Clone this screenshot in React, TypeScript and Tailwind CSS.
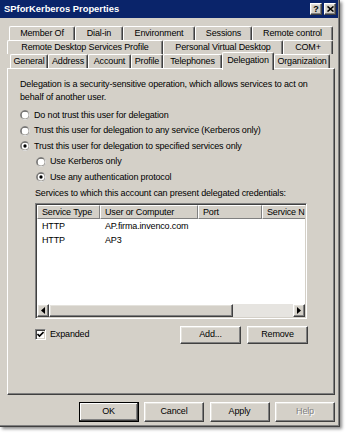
import React from 'react';

const raised = 'border-t border-l border-t-white border-l-white border-r border-b border-r-[#404040] border-b-[#404040] shadow-[inset_-1px_-1px_0_#808080,inset_1px_1px_0_#e4e2dc]';

const Radio = ({ checked }: { checked?: boolean }) => (
  <svg width="10" height="10" viewBox="0 0 12 12" className="shrink-0">
    <circle cx="6" cy="6" r="5.5" fill="none" stroke="#808080" />
    <path d="M9.89 2.11 A5.5 5.5 0 0 1 2.11 9.89" fill="none" stroke="#ffffff" />
    <circle cx="6" cy="6" r="4.5" fill="none" stroke="#404040" />
    <path d="M9.18 2.82 A4.5 4.5 0 0 1 2.82 9.18" fill="none" stroke="#d4d0c8" />
    <circle cx="6" cy="6" r="4" fill="#ffffff" />
    {checked && <circle cx="6" cy="6" r="2" fill="#000000" />}
  </svg>
);

const RadioRow = ({ label, checked, indent }: { label: string; checked?: boolean; indent?: boolean }) => (
  <div className={`h-[15.5px] flex items-center gap-[4px] ${indent ? 'ml-[16px]' : ''}`}>
    <Radio checked={checked} />
    <span className="leading-[13px] whitespace-nowrap">{label}</span>
  </div>
);

const Tab = ({ label, w, selected }: { label: string; w: string; selected?: boolean }) => (
  <div
    className={`${w} ${selected ? 'relative z-10 -mt-[2px] h-[18px] pt-[1px]' : 'h-[14px]'} shrink-0 bg-[#d4d0c8] rounded-t-[2px] border-t border-l border-white border-r border-r-[#404040] shadow-[inset_-1px_0_0_#808080] flex justify-center leading-[13px] whitespace-nowrap`}
  >
    {label}
  </div>
);

const Button = ({ label, w, isDefault, disabled }: { label: string; w: string; isDefault?: boolean; disabled?: boolean }) => (
  <div
    className={`${w} h-[20px] shrink-0 flex items-center justify-center bg-[#d4d0c8] ${
      isDefault
        ? 'border border-black shadow-[inset_-1px_-1px_0_#404040,inset_1px_1px_0_#ffffff,inset_-2px_-2px_0_#808080]'
        : raised
    } ${disabled ? 'text-[#808080] [text-shadow:1px_1px_0_#ffffff]' : ''}`}
  >
    {label}
  </div>
);

const Arrow = ({ dir }: { dir: 'left' | 'right' }) => (
  <svg width="4" height="7" viewBox="0 0 4 7">
    {dir === 'left' ? <path d="M4 0 L0 3.5 L4 7 Z" fill="#000" /> : <path d="M0 0 L4 3.5 L0 7 Z" fill="#000" />}
  </svg>
);

const columns = [
  { label: 'Service Type', w: 'w-[63px]' },
  { label: 'User or Computer', w: 'w-[98px]' },
  { label: 'Port', w: 'w-[64px]' },
  { label: 'Service N', w: 'w-[90px]' },
];

const rows = [
  ['HTTP', 'AP.firma.invenco.com'],
  ['HTTP', 'AP3'],
];

export default function App() {
  return (
    <div className="w-[347px] h-[433px] bg-white overflow-hidden font-['Liberation_Sans',Arial,sans-serif] text-[9px] tracking-[-0.15px] text-black">
      <div className="w-[340px] h-[427px] bg-[#d4d0c8] flex flex-col border-r border-b border-[#404040] shadow-[inset_-1px_-1px_0_#808080,2px_2px_3px_rgba(0,0,0,0.45)]">
        {/* Title bar */}
        <div className="h-[18px] mr-[1px] bg-[#0a246a] flex items-center justify-between pl-[4px] pr-[2px]">
          <span className="text-white font-bold text-[9.4px] tracking-normal">SPforKerberos Properties</span>
          <div className="flex gap-[2px]">
            <div className={`w-[12px] h-[12px] bg-[#d4d0c8] ${raised} flex items-center justify-center text-[9px] font-bold leading-none`}>?</div>
            <div className={`w-[12px] h-[12px] bg-[#d4d0c8] ${raised} flex items-center justify-center`}>
              <svg width="7" height="6" viewBox="0 0 7 6">
                <path d="M0.5 0.5 L6.5 5.5 M6.5 0.5 L0.5 5.5" stroke="#000" strokeWidth="1.6" />
              </svg>
            </div>
          </div>
        </div>

        {/* Tabs */}
        <div className="mt-[8px] flex flex-col">
          <div className="flex ml-[9px]">
            <Tab label="Member Of" w="w-[66px]" />
            <Tab label="Dial-in" w="w-[48px]" />
            <Tab label="Environment" w="w-[72px]" />
            <Tab label="Sessions" w="w-[57px]" />
            <Tab label="Remote control" w="w-[81px]" />
          </div>
          <div className="flex ml-[7px]">
            <Tab label="Remote Desktop Services Profile" w="w-[156px]" />
            <Tab label="Personal Virtual Desktop" w="w-[120px]" />
            <Tab label="COM+" w="w-[50px]" />
          </div>
          <div className="flex items-start ml-[10px] h-[14px]">
            <Tab label="General" w="w-[38px]" />
            <Tab label="Address" w="w-[40px]" />
            <Tab label="Account" w="w-[43px]" />
            <Tab label="Profile" w="w-[32px]" />
            <Tab label="Telephones" w="w-[59px]" />
            <Tab label="Delegation" w="w-[52px]" selected />
            <Tab label="Organization" w="w-[56px]" />
          </div>
        </div>

        {/* Panel */}
        <div className="ml-[7px] w-[328px] h-[327px] border-t border-l border-white border-r border-b border-r-[#404040] border-b-[#404040] shadow-[inset_-1px_-1px_0_#808080] flex flex-col pl-[12px] pt-[8.5px]">
          <p className="leading-[13px] whitespace-nowrap">
            Delegation is a security-sensitive operation, which allows services to act on
            <br />
            behalf of another user.
          </p>

          <div className="mt-[4px] flex flex-col">
            <RadioRow label="Do not trust this user for delegation" />
            <RadioRow label="Trust this user for delegation to any service (Kerberos only)" />
            <RadioRow label="Trust this user for delegation to specified services only" checked />
            <RadioRow label="Use Kerberos only" indent />
            <RadioRow label="Use any authentication protocol" checked indent />
          </div>

          <div className="ml-[15px] mt-[1.5px] h-[13px] leading-[13px] whitespace-nowrap">
            Services to which this account can present delegated credentials:
          </div>

          {/* List view */}
          <div className="ml-[15px] mt-[3px] w-[272px] h-[116px] bg-white border-t border-l border-[#808080] border-r border-b border-r-white border-b-white shadow-[inset_1px_1px_0_#404040,inset_-1px_-1px_0_#d4d0c8] p-[1px] flex flex-col overflow-hidden">
            <div className="h-[14px] flex shrink-0 overflow-hidden">
              {columns.map((c) => (
                <div
                  key={c.label}
                  className={`${c.w} shrink-0 h-[14px] bg-[#d4d0c8] border-t border-l border-white border-r border-b border-r-[#808080] border-b-[#808080] pl-[4px] leading-[12px] whitespace-nowrap`}
                >
                  {c.label}
                </div>
              ))}
            </div>
            <div className="flex-1 flex flex-col">
              {rows.map((r, i) => (
                <div key={i} className="h-[14px] flex leading-[14px] whitespace-nowrap">
                  <span className="w-[63px] pl-[5px]">{r[0]}</span>
                  <span className="w-[98px] pl-[5px]">{r[1]}</span>
                </div>
              ))}
            </div>
            <div className="h-[13px] flex shrink-0">
              <div className={`w-[12px] h-[13px] bg-[#d4d0c8] ${raised} flex items-center justify-center`}>
                <Arrow dir="left" />
              </div>
              <div className={`w-[184px] h-[13px] bg-[#d4d0c8] ${raised}`} />
              <div className="flex-1 h-[13px] bg-[#e6e4e0]" />
              <div className={`w-[12px] h-[13px] bg-[#d4d0c8] ${raised} flex items-center justify-center`}>
                <Arrow dir="right" />
              </div>
            </div>
          </div>

          {/* Expanded + buttons */}
          <div className="ml-[15px] mt-[7px] w-[273px] h-[18px] flex items-center">
            <div className="w-[11px] h-[11px] bg-white border-t border-l border-[#808080] border-r border-b border-r-white border-b-white shadow-[inset_1px_1px_0_#404040,inset_-1px_-1px_0_#d4d0c8] flex items-center justify-center">
              <svg width="7" height="7" viewBox="0 0 7 7">
                <path d="M0.5 3 L2.5 5 L6.5 1" fill="none" stroke="#000" strokeWidth="1.6" />
              </svg>
            </div>
            <span className="ml-[4px] leading-[13px]">Expanded</span>
            <div className="ml-auto flex gap-[6px]">
              <div className={`w-[61px] h-[18px] bg-[#d4d0c8] ${raised} flex items-center justify-center`}>Add...</div>
              <div className={`w-[61px] h-[18px] bg-[#d4d0c8] ${raised} flex items-center justify-center`}>Remove</div>
            </div>
          </div>
        </div>

        {/* Dialog buttons */}
        <div className="mt-[7px] flex justify-end gap-[5.5px] pr-[4px]">
          <Button label="OK" w="w-[60px]" isDefault />
          <Button label="Cancel" w="w-[60px]" />
          <Button label="Apply" w="w-[60px]" />
          <Button label="Help" w="w-[60px]" disabled />
        </div>
      </div>
    </div>
  );
}
